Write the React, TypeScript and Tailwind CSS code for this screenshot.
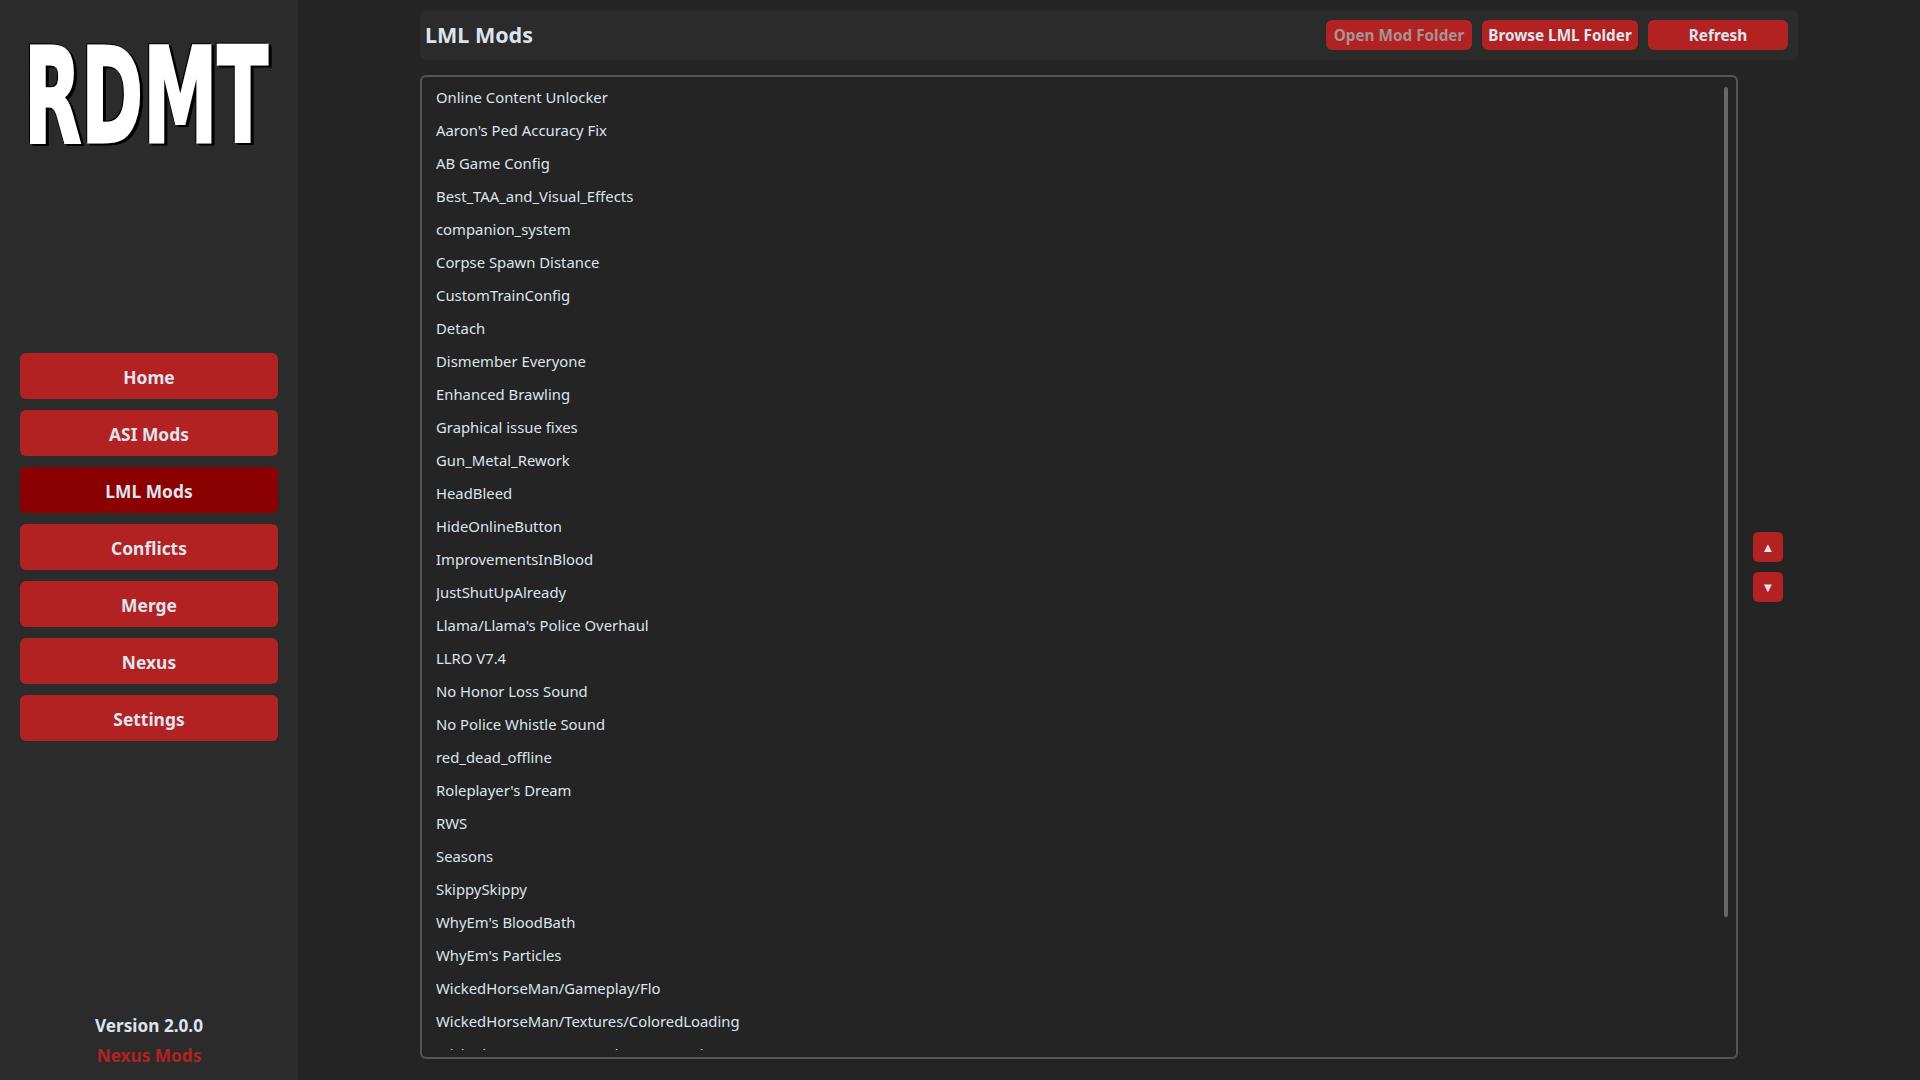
const NAV = ["Home", "ASI Mods", "LML Mods", "Conflicts", "Merge", "Nexus", "Settings"];
const MODS = [
  "Online Content Unlocker", "Aaron's Ped Accuracy Fix", "AB Game Config", "Best_TAA_and_Visual_Effects",
  "companion_system", "Corpse Spawn Distance", "CustomTrainConfig", "Detach", "Dismember Everyone",
  "Enhanced Brawling", "Graphical issue fixes", "Gun_Metal_Rework", "HeadBleed", "HideOnlineButton",
  "ImprovementsInBlood", "JustShutUpAlready", "Llama/Llama's Police Overhaul", "LLRO V7.4",
  "No Honor Loss Sound", "No Police Whistle Sound", "red_dead_offline", "Roleplayer's Dream", "RWS",
  "Seasons", "SkippySkippy", "WhyEm's BloodBath", "WhyEm's Particles", "WickedHorseMan/Gameplay/Flo",
  "WickedHorseMan/Textures/ColoredLoading", "WickedHorseMan/Gameplay/Penetration",
];

function Logo() {
  return (
    <svg width="298" height="180" viewBox="0 0 298 180" className="block">
      <text x="24" y="142" textLength="244" lengthAdjust="spacingAndGlyphs" fill="#fff" stroke="#fff" strokeWidth="3"
        className="[filter:drop-shadow(3px_2px_0_#000)_drop-shadow(-1px_-1px_0_#000)]"
        style={{ fontFamily: '"DejaVu Sans", sans-serif', fontWeight: 700, fontSize: 132 }}>RDMT</text>
    </svg>
  );
}

export default function App() {
  return (
    <div className="flex h-[1080px] w-[1920px] overflow-hidden bg-[#242424] font-['Noto_Sans','Open_Sans',sans-serif] text-[#dce4ee]">
      <aside className="flex w-[298px] shrink-0 flex-col bg-[#2b2b2b]">
        <div className="h-[353px] shrink-0">
          <Logo />
        </div>
        <nav className="flex flex-col gap-[11px] px-[20px]">
          {NAV.map((n) => (
            <div
              key={n}
              className={`flex h-[46px] items-center justify-center rounded-[6px] pt-[3px] text-[17.4px] font-bold ${n === "LML Mods" ? "bg-[#8b0000]" : "bg-[#b22222]"}`}
            >
              {n}
            </div>
          ))}
        </nav>
        <div className="mt-auto flex flex-col items-center pb-[9px] font-bold">
          <div className="h-[30px] text-[17.2px] leading-[30px]">Version 2.0.0</div>
          <div className="h-[30px] text-[17.2px] leading-[30px] text-[#b22222]">Nexus Mods</div>
        </div>
      </aside>
      <main className="flex flex-1 flex-col pl-[122px] pt-[10px]">
        <header className="flex h-[50px] w-[1378px] items-center justify-between rounded-[6px] bg-[#2b2b2b] pl-[5px] pr-[10px]">
          <h1 className="pt-[1px] text-[21.5px] font-bold">LML Mods</h1>
          <div className="flex gap-[10px] text-[15.3px] font-bold">
            <div className="flex h-[30px] w-[146px] items-center justify-center rounded-[6px] bg-[#b22222] text-[#a89292]">Open Mod Folder</div>
            <div className="flex h-[30px] w-[156px] items-center justify-center rounded-[6px] bg-[#b22222]">Browse LML Folder</div>
            <div className="flex h-[30px] w-[140px] items-center justify-center rounded-[6px] bg-[#b22222]">Refresh</div>
          </div>
        </header>
        <div className="mt-[15px] flex items-center">
          <div className="relative h-[984px] w-[1318px] rounded-[6px] border-2 border-[#555555] py-[4px] pl-[14px]">
            <div className="h-[969px] overflow-hidden text-[14.85px]">
              {MODS.map((m) => (
                <div key={m} className="flex h-[33px] items-center">{m}</div>
              ))}
            </div>
            <div className="absolute left-[1302px] top-[10px] h-[830px] w-[4px] rounded-[2px] bg-[#666666]" />
          </div>
          <div className="ml-[15px] flex flex-col gap-[10px]">
            <div className="flex h-[30px] w-[30px] items-center justify-center rounded-[5px] bg-[#b22222] text-[13px] leading-none">▲</div>
            <div className="flex h-[30px] w-[30px] items-center justify-center rounded-[5px] bg-[#b22222] text-[13px] leading-none">▼</div>
          </div>
        </div>
      </main>
    </div>
  );
}
